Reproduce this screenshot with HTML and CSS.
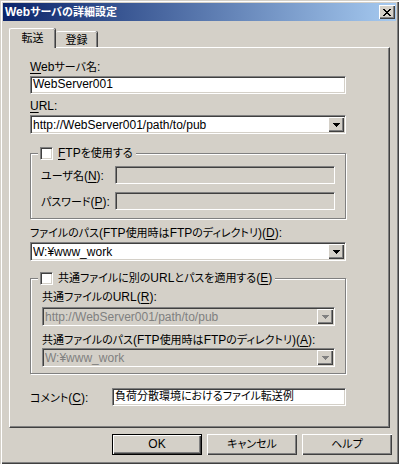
FILE: index.html
```html
<!DOCTYPE html>
<html lang="ja">
<head>
<meta charset="utf-8">
<title>Webサーバの詳細設定</title>
<link rel="stylesheet" href="styles.css">
</head>
<body>
<div class="window">
  <div class="titlebar">
    <span class="title">Web<span class="j">サーバの詳細設定</span></span>
    <span class="close">
      <svg width="8" height="7" viewBox="0 0 8 7" shape-rendering="crispEdges"><path d="M0 0h2v1h-2zM6 0h2v1h-2zM1 1h2v1h-2zM5 1h2v1h-2zM2 2h4v1h-4zM3 3h2v1h-2zM2 4h4v1h-4zM1 5h2v1h-2zM5 5h2v1h-2zM0 6h2v1h-2zM6 6h2v1h-2z" fill="#000"/></svg>
    </span>
  </div>
  <div class="client">
    <div class="tabs">
      <div class="tab active j">転送</div>
      <div class="tab j">登録</div>
    </div>
    <div class="panel">
      <div class="lbl l1"><u>W</u>eb<span class="j">サーバ名</span>:</div>
      <div class="edit e1">WebServer001</div>
      <div class="lbl l2"><u>U</u>RL:</div>
      <div class="combo c1"><span class="val">http://WebServer001/path/to/pub</span><span class="drop"><svg width="7" height="4" viewBox="0 0 7 4" shape-rendering="crispEdges"><path d="M0 0h7v1h-7zM1 1h5v1h-5zM2 2h3v1h-3zM3 3h1v1h-1z" fill="#000"/></svg></span></div>

      <div class="group g1">
        <div class="legend"><span class="check"></span><span><u>F</u>TP<span class="j">を使用する</span></span></div>
        <div class="row r1"><span class="rlbl"><span class="j">ユーザ名</span>(<u>N</u>):</span><div class="edit disabled grow"></div></div>
        <div class="row r2"><span class="rlbl"><span class="j">パスワード</span>(<u>P</u>):</span><div class="edit disabled grow"></div></div>
      </div>

      <div class="lbl l3"><span class="j">ファイルのパス</span>(FTP<span class="j">使用時は</span>FTP<span class="j">のディレクトリ</span>)(<u>D</u>):</div>
      <div class="combo c2"><span class="val">W:¥www_work</span><span class="drop"><svg width="7" height="4" viewBox="0 0 7 4" shape-rendering="crispEdges"><path d="M0 0h7v1h-7zM1 1h5v1h-5zM2 2h3v1h-3zM3 3h1v1h-1z" fill="#000"/></svg></span></div>

      <div class="group g2">
        <div class="legend"><span class="check"></span><span><span class="j">共通ファイルに別の</span>URL<span class="j">とパスを適用する</span>(<u>E</u>)</span></div>
        <div class="lbl l4"><span class="j">共通ファイルの</span>URL(<u>R</u>):</div>
        <div class="combo disabled c3"><span class="val">http://WebServer001/path/to/pub</span><span class="drop"><svg width="7" height="4" viewBox="0 0 7 4" shape-rendering="crispEdges"><path d="M0 0h7v1h-7zM1 1h5v1h-5zM2 2h3v1h-3zM3 3h1v1h-1z" fill="#808080"/></svg></span></div>
        <div class="lbl l5"><span class="j">共通ファイルのパス</span>(FTP<span class="j">使用時は</span>FTP<span class="j">のディレクトリ</span>)(<u>A</u>):</div>
        <div class="combo disabled c4"><span class="val">W:¥www_work</span><span class="drop"><svg width="7" height="4" viewBox="0 0 7 4" shape-rendering="crispEdges"><path d="M0 0h7v1h-7zM1 1h5v1h-5zM2 2h3v1h-3zM3 3h1v1h-1z" fill="#808080"/></svg></span></div>
      </div>

      <div class="row comment"><span class="clbl"><span class="j">コメント</span>(<u>C</u>):</span><div class="edit grow j">負荷分散環境におけるファイル転送例</div></div>
    </div>
    <div class="buttons">
      <div class="btn default">OK</div>
      <div class="btn j">キャンセル</div>
      <div class="btn j">ヘルプ</div>
    </div>
  </div>
</div>
</body>
</html>
```

FILE: styles.css
```css
html, body {
  margin: 0;
  padding: 0;
  background: #d4d0c8;
}
body {
  font-family: "Liberation Sans", "Noto Sans CJK JP", sans-serif;
  font-size: 12px;
  font-feature-settings: "palt";
  color: #000;
}
.j { font-size: 11px; }
u { text-decoration: underline; text-underline-offset: 2px; }

.window {
  width: 399px;
  height: 464px;
  box-sizing: border-box;
  padding: 3px;
  display: flex;
  flex-direction: column;
  box-shadow: inset 1px 1px 0 #d4d0c8, inset 2px 2px 0 #fff, inset -1px -1px 0 #404040, inset -2px -2px 0 #808080;
}

.titlebar {
  height: 18px;
  flex: none;
  display: flex;
  align-items: flex-start;
  justify-content: space-between;
  padding: 0 1px 0 2px;
  background: linear-gradient(to right, #0a246a, #a6caf0);
}
.title {
  color: #fff;
  font-weight: bold;
  line-height: 18px;
}
.close {
  margin-top: 2px;
  width: 16px;
  height: 14px;
  box-sizing: border-box;
  background: #d4d0c8;
  display: flex;
  align-items: center;
  justify-content: center;
  box-shadow: inset 1px 1px 0 #fff, inset -1px -1px 0 #404040, inset -2px -2px 0 #808080;
}
.close svg { display: block; }

.client {
  flex: 1;
  display: flex;
  flex-direction: column;
  padding-left: 6px;
}

.tabs {
  margin-top: 7px;
  height: 19px;
  display: flex;
  align-items: flex-end;
  position: relative;
  z-index: 1;
}
.tab {
  box-sizing: border-box;
  background: #d4d0c8;
  border-top: 1px solid #fff;
  border-left: 1px solid #fff;
  border-top-left-radius: 2px;
  border-top-right-radius: 2px;
  box-shadow: inset -1px 0 0 #808080, 1px 0 0 #404040;
  text-align: center;
}
.tab.active {
  width: 46px;
  height: 20px;
  margin-bottom: -1px;
  padding-top: 1px;
  line-height: 16px;
}
.tab:not(.active) {
  width: 41px;
  height: 16px;
  margin-left: 1px;
  padding-top: 0;
  line-height: 16px;
  border-left: none;
}

.panel {
  width: 381px;
  height: 381px;
  box-sizing: border-box;
  border-top: 1px solid #fff;
  border-left: 1px solid #fff;
  border-right: 1px solid #404040;
  border-bottom: 1px solid #404040;
  box-shadow: inset -1px -1px 0 #808080;
  padding: 0 43px 0 20px;
  display: flex;
  flex-direction: column;
}

.lbl {
  height: 14px;
  line-height: 14px;
  white-space: nowrap;
}
.l1 { margin-top: 12px; }
.l2 { margin-top: 5px; }
.l3 { margin-top: 7px; }
.l4 { margin-top: 5px; }
.l5 { margin-top: 7px; }

.edit, .combo {
  box-sizing: border-box;
  background: #fff;
  border: 1px solid;
  border-color: #808080 #fff #fff #808080;
  box-shadow: inset 1px 1px 0 #404040, inset -1px -1px 0 #d4d0c8;
  white-space: nowrap;
  overflow: hidden;
}
.edit {
  height: 18px;
  line-height: 15px;
  padding-left: 2px;
}
.e1 { margin-top: 2px; }
.edit.disabled { background: #d4d0c8; }

.combo {
  height: 19px;
  display: flex;
  align-items: stretch;
  padding: 1px 1px 1px 2px;
}
.combo .val {
  flex: 1;
  line-height: 16px;
  overflow: hidden;
}
.combo .drop {
  width: 16px;
  flex: none;
  box-sizing: border-box;
  background: #d4d0c8;
  display: flex;
  align-items: center;
  justify-content: center;
  box-shadow: inset 1px 1px 0 #fff, inset -1px -1px 0 #404040, inset -2px -2px 0 #808080;
}
.combo .drop svg { display: block; }
.combo.disabled { background: #d4d0c8; color: #808080; }
.c1 { margin-top: 2px; }
.c2 { margin-top: 2px; }
.c3 { margin-top: 3px; }
.c4 { margin-top: 1px; }

.group {
  border: 1px solid #808080;
  box-shadow: inset 1px 1px 0 #fff, 1px 1px 0 #fff;
  display: flex;
  flex-direction: column;
}
.g1 { margin-top: 19px; padding: 0 10px 8px 10px; }
.g2 { margin-top: 17px; padding: 0 10px 6px 11px; }

.legend {
  margin-top: -7px;
  height: 13px;
  align-self: flex-start;
  display: flex;
  align-items: center;
  gap: 5px;
  background: #d4d0c8;
  padding: 0 3px 0 2px;
  line-height: 13px;
  white-space: nowrap;
}
.g1 .legend { margin-left: -3px; }
.g2 .legend { margin-left: -4px; }
.check {
  width: 13px;
  height: 13px;
  box-sizing: border-box;
  background: #fff;
  border: 1px solid;
  border-color: #808080 #fff #fff #808080;
  box-shadow: inset 1px 1px 0 #404040, inset -1px -1px 0 #d4d0c8;
}

.row {
  display: flex;
  align-items: center;
}
.r1 { margin-top: 6px; }
.r2 { margin-top: 8px; }
.rlbl { width: 74px; flex: none; white-space: nowrap; }
.grow { flex: 1; }

.comment { margin-top: 14px; }
.clbl { width: 82px; flex: none; white-space: nowrap; }

.buttons {
  margin-top: 6px;
  display: flex;
  justify-content: flex-end;
  gap: 5px;
  padding-right: 4px;
}
.btn {
  width: 90px;
  height: 21px;
  box-sizing: border-box;
  text-align: center;
  line-height: 20px;
  box-shadow: inset 1px 1px 0 #fff, inset -1px -1px 0 #404040, inset -2px -2px 0 #808080;
}
.btn.default {
  border: 1px solid #000;
  line-height: 18px;
}
```
